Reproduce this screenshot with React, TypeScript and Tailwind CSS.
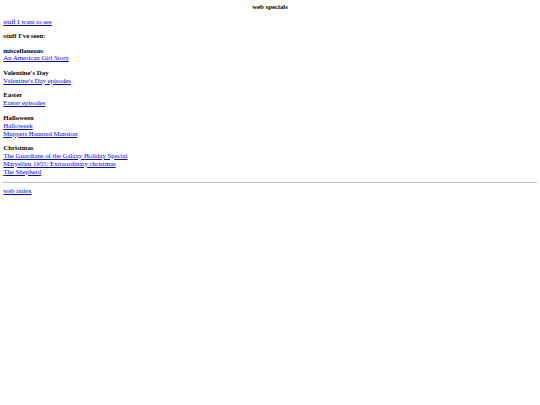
const sections = [
  { title: "miscellaneous", links: ["An American Girl Story"] },
  { title: "Valentine's Day", links: ["Valentine's Day episodes"] },
  { title: "Easter", links: ["Easter episodes"] },
  { title: "Halloween", links: ["Halloweek", "Muppets Haunted Mansion"] },
  {
    title: "Christmas",
    links: [
      "The Guardians of the Galaxy Holiday Special",
      "Maryellen 1955: Extraordinary christmas",
      "The Shepherd",
    ],
  },
];

function A({ children }: { children: React.ReactNode }) {
  return (
    <a href="#" className="text-[#0000ee] underline">
      {children}
    </a>
  );
}

export default function App() {
  return (
    <div className="min-h-[405px] bg-white px-[3.3px] pt-[3px] font-['Liberation_Serif',serif] text-[6.8px] leading-[7.9px] text-black">
      <p className="text-center font-bold">web specials</p>
      <p className="mt-[6.6px]">
        <A>stuff I want to see</A>
      </p>
      <p className="mt-[6.6px] font-bold">stuff I've seen:</p>
      {sections.map((s) => (
        <div key={s.title} className="mt-[6.6px] flex flex-col items-start">
          <b>{s.title}</b>
          {s.links.map((l) => (
            <A key={l}>{l}</A>
          ))}
        </div>
      ))}
      <hr className="mt-[6.6px] border-t border-[#c0c0c0]" />
      <p className="mt-[3.5px]">
        <A>web index</A>
      </p>
    </div>
  );
}
